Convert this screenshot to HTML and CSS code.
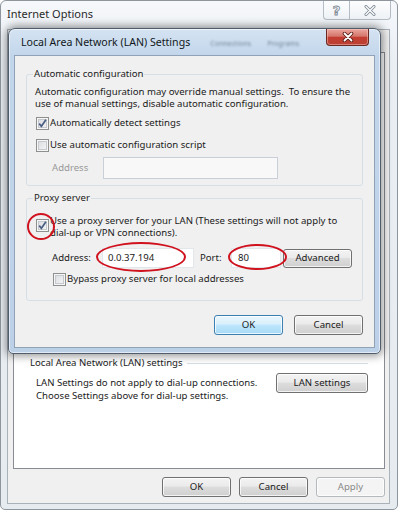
FILE: index.html
```html
<!DOCTYPE html>
<html>
<head>
<meta charset="utf-8">
<title>Internet Options</title>
<link rel="stylesheet" href="styles.css">
</head>
<body>
<div class="win">
  <div class="win-title">
    <span class="win-caption">Internet Options</span>
    <div class="cap-btns">
      <span class="cap-btn help">?</span>
      <span class="cap-btn close">
        <svg width="12" height="11" viewBox="0 0 12 11"><path d="M2 1.5 L10 9.5 M10 1.5 L2 9.5" stroke="#7d8995" stroke-width="3" stroke-linecap="round"/><path d="M2 1.5 L10 9.5 M10 1.5 L2 9.5" stroke="#fff" stroke-width="1.3" stroke-linecap="round"/></svg>
      </span>
    </div>
  </div>
  <div class="win-client">
    <div class="tabs">
      <span class="tab t1"></span><span class="tab t2"></span><span class="tab t3"></span><span class="tab t4"></span><span class="tab t5"></span><span class="tab t6"></span><span class="tab t7"></span>
    </div>
    <div class="tabpanel">
      <div class="lan-group">
        <div class="group-head"><span class="group-label">Local Area Network (LAN) settings</span><span class="rule"></span></div>
        <div class="lan-row">
          <p class="lan-text">LAN Settings do not apply to dial-up connections.<br>Choose Settings above for dial-up settings.</p>
          <button class="btn lan-btn">LAN settings</button>
        </div>
      </div>
    </div>
    <div class="btn-row">
      <button class="btn w69">OK</button>
      <button class="btn w69">Cancel</button>
      <button class="btn w69 disabled">Apply</button>
    </div>
  </div>
</div>

<div class="dlg">
  <div class="dlg-title">
    <span class="dlg-caption">Local Area Network (LAN) Settings</span>
    <span class="ghost-tabs"><span>Connections</span><span>Programs</span></span>
    <span class="dlg-close">
      <svg width="12" height="10" viewBox="0 0 12 10"><path d="M2.5 1.5 L9.5 8.5 M9.5 1.5 L2.5 8.5" stroke="#5b1e19" stroke-width="3.6" stroke-linecap="round"/><path d="M2.5 1.5 L9.5 8.5 M9.5 1.5 L2.5 8.5" stroke="#fff" stroke-width="1.8" stroke-linecap="round"/></svg>
    </span>
  </div>
  <div class="dlg-client">
    <fieldset class="grp g1">
      <legend>Automatic configuration</legend>
      <p class="desc">Automatic configuration may override manual settings.&nbsp; To ensure the<br>use of manual settings, disable automatic configuration.</p>
      <div class="chk-row r1"><span class="chk"><svg width="11" height="11" viewBox="0 0 11 11"><path d="M2.2 5.6 L4.4 8.3 L8.9 1.8" fill="none" stroke="#4a5d82" stroke-width="1.7"/></svg></span>Automatically detect settings</div>
      <div class="chk-row r2"><span class="chk"></span>Use automatic configuration script</div>
      <div class="field-row"><span class="muted lbl-script">Address</span><span class="edit edit-script"></span></div>
    </fieldset>
    <fieldset class="grp g2">
      <legend>Proxy server</legend>
      <div class="chk-row multi"><span class="chk"><svg width="11" height="11" viewBox="0 0 11 11"><path d="M2.2 5.6 L4.4 8.3 L8.9 1.8" fill="none" stroke="#4a5d82" stroke-width="1.7"/></svg></span><span>Use a proxy server for your LAN (These settings will not apply to<br>dial-up or VPN connections).</span></div>
      <div class="proxy-row">
        <span class="lbl-addr">Address:</span>
        <span class="edit edit-addr">0.0.37.194</span>
        <span class="lbl-port">Port:</span>
        <span class="edit edit-port">80</span>
        <button class="btn adv">Advanced</button>
      </div>
      <div class="chk-row bypass"><span class="chk"></span>Bypass proxy server for local addresses</div>
    </fieldset>
    <div class="dlg-btns">
      <button class="btn w69 focus">OK</button>
      <button class="btn w69">Cancel</button>
    </div>
  </div>
</div>

<span class="mark m1"></span>
<span class="mark m2"></span>
<span class="mark m3"></span>
</body>
</html>
```

FILE: styles.css
```css
* { box-sizing: border-box; }

body {
  margin: 0;
  width: 400px;
  height: 512px;
  overflow: hidden;
  position: relative;
  background: #fff;
  font: 9.6px/12px "Noto Sans", "Open Sans", sans-serif;
  color: #1b1b1b;
}

p { margin: 0; white-space: nowrap; }

/* ---------- outer window ---------- */
.win {
  width: 398px;
  height: 510px;
  border: 1px solid #8e959c;
  border-radius: 6px 6px 5px 5px;
  background: linear-gradient(#f6f8fb, #eaeff4 60px, #e6ebf0);
  display: flex;
  flex-direction: column;
}

.win-title {
  height: 28px;
  display: flex;
  align-items: flex-start;
  padding-left: 6px;
}

.win-caption {
  font-size: 11px;
  line-height: 26px;
  color: #2a2a2a;
}

.cap-btns {
  margin-left: auto;
  margin-right: 6px;
  display: flex;
}

.cap-btn {
  height: 19px;
  border: 1px solid #b4bcc5;
  border-top: none;
  background: linear-gradient(#fdfdfe, #eef2f6);
  display: flex;
  align-items: center;
  justify-content: center;
}

.help {
  width: 26px;
  border-right: none;
  border-radius: 0 0 0 4px;
  font: bold 13px/1 "DejaVu Sans", sans-serif;
  color: #fff;
  -webkit-text-stroke: 0.9px #7d8995;
}

.close {
  width: 42px;
  border-radius: 0 0 4px 0;
}

.win-client {
  flex: 1;
  margin: 0 7px 5px 6px;
  border: 1px solid #a9b1b9;
  background: #f0f0f0;
  display: flex;
  flex-direction: column;
  padding: 4px 4px 0 5px;
}

.tabs {
  height: 18px;
  display: flex;
  padding-left: 2px;
}

.tab {
  width: 48px;
  border: 1px solid #898c95;
  border-bottom: none;
  background: linear-gradient(#f2f2f2, #e3e3e3);
}

.tabpanel {
  height: 417px;
  border: 1px solid #898c95;
  background: #fff;
  padding: 304px 16px 0 16px;
}

.group-head {
  display: flex;
  align-items: center;
  height: 12px;
}

.group-label { padding-right: 4px; white-space: nowrap; }

.rule {
  flex: 1;
  border-top: 1px solid #d5dfe5;
}

.lan-row {
  display: flex;
  align-items: flex-start;
  justify-content: space-between;
  margin-top: 7px;
  padding-left: 6px;
}

.lan-text { line-height: 13px; }

.lan-btn {
  width: 92px;
  margin-top: -3px;
}

.btn-row {
  display: flex;
  justify-content: flex-end;
  gap: 8px;
  margin-top: 8px;
}

/* ---------- buttons ---------- */
.btn {
  height: 20px;
  padding: 0;
  border: 1px solid #707070;
  border-radius: 3px;
  background: linear-gradient(#f3f3f3 0%, #ebebeb 45%, #dddddd 50%, #cfcfcf 100%);
  box-shadow: inset 0 0 0 1px rgba(255, 255, 255, 0.75);
  font: inherit;
  color: #1b1b1b;
}

.w69 { width: 69px; }

.btn.focus {
  border-color: #3c7fb1;
  background: linear-gradient(#eaf6fd 0%, #d9f0fc 45%, #bee6fd 50%, #a7d9f5 100%);
}

.btn.disabled {
  border-color: #b5b9bc;
  background: #f4f4f4;
  color: #8a8a8a;
}

/* ---------- LAN settings dialog ---------- */
.dlg {
  position: absolute;
  left: 8px;
  top: 28px;
  width: 373px;
  height: 326px;
  border: 1px solid #4f5d6d;
  border-radius: 7px 7px 5px 5px;
  background: linear-gradient(#d5e3f2 0, #c2d6eb 27px, #bcd1e8 100%);
  box-shadow: 0 0 9px 2px rgba(0, 0, 0, 0.42), inset 0 0 0 1px rgba(255, 255, 255, 0.55);
  padding: 0 5px 5px 5px;
  display: flex;
  flex-direction: column;
}

.dlg-title {
  height: 26px;
  display: flex;
  align-items: flex-start;
}

.dlg-caption {
  padding-left: 7px;
  font-size: 10.6px;
  line-height: 26px;
  color: #101820;
  white-space: nowrap;
  flex: none;
}

.ghost-tabs {
  display: flex;
  gap: 16px;
  margin-left: 20px;
  line-height: 26px;
  padding-top: 2px;
  font-size: 7px;
  color: #56687c;
  filter: blur(1.3px);
  opacity: 0.75;
  white-space: nowrap;
}

.dlg-close {
  flex: none;
  margin-left: auto;
  margin-right: 6px;
  width: 43px;
  height: 17px;
  border: 1px solid #6a2822;
  border-top: none;
  border-radius: 0 0 4px 4px;
  background: linear-gradient(#eaa79f 0%, #d6766b 45%, #c33d31 52%, #bb4035 100%);
  box-shadow: inset 0 0 0 1px rgba(255, 210, 200, 0.45);
  display: flex;
  align-items: center;
  justify-content: center;
}

.dlg-client {
  flex: 1;
  background: #f0f0f0;
  border: 1px solid #8fa2b6;
  padding: 12px 11px 0 11px;
  display: flex;
  flex-direction: column;
}

.grp {
  margin: 0;
  min-width: 0;
  border: 1px solid #d5dfe5;
  border-radius: 3px;
  padding: 0 8px 6px 8px;
}

.grp legend {
  padding: 0 1px;
  margin-left: -2px;
  line-height: 12px;
}

.g2 {
  margin-top: 6px;
  padding-bottom: 14px;
}

.desc { margin-top: 6px; }

.chk-row {
  display: flex;
  align-items: center;
  height: 14px;
  white-space: nowrap;
}

.r1 { margin-top: 6px; }
.r2 { margin-top: 8px; }

.chk {
  width: 13px;
  height: 13px;
  margin-left: 1px;
  margin-right: 1px;
  border: 1px solid #8e8f8f;
  background: linear-gradient(135deg, #d6d9dd, #f8f8f8);
  box-shadow: inset 0 0 0 1px #f6f6f6, inset 0 0 0 2px #c5c9ce;
  display: flex;
  align-items: center;
  justify-content: center;
  flex: none;
}

.chk-row.multi {
  align-items: flex-start;
  height: auto;
  margin-top: 11px;
}

.chk-row.multi .chk { margin-top: 4px; }

.bypass { margin-top: 4px; }
.bypass .chk { margin-left: 18px; }

.field-row {
  display: flex;
  align-items: center;
  height: 22px;
  margin-top: 5px;
}

.muted { color: #9a9a9a; }

.lbl-script {
  margin-left: 17px;
  width: 51px;
}

.edit {
  height: 100%;
  border: 1px solid #c9cfd6;
  background: #f8f8f8;
}

.edit-script { width: 175px; }

.proxy-row {
  display: flex;
  align-items: center;
  height: 20px;
  margin-top: 9px;
}

.lbl-addr {
  margin-left: 17px;
  width: 50px;
}

.edit-addr {
  width: 92px;
  background: #fff;
  border-color: #e2e7ec;
  padding-left: 5px;
  line-height: 18px;
}

.lbl-port {
  margin-left: 6px;
  width: 31px;
}

.edit-port {
  width: 50px;
  background: #fff;
  border-color: #e2e7ec;
  padding-left: 6px;
  line-height: 18px;
}

.adv {
  width: 69px;
  height: 19px;
  margin-left: 2px;
}

.dlg-btns {
  display: flex;
  justify-content: flex-end;
  gap: 11px;
  margin-top: 14px;
}

/* ---------- red annotation ellipses ---------- */
.mark {
  position: absolute;
  border: 2.8px solid #d0121e;
  border-radius: 50%;
}

.m1 { left: 27px; top: 213px; width: 28px; height: 27px; }
.m2 { left: 96px; top: 242px; width: 90px; height: 30px; }
.m3 { left: 228px; top: 244px; width: 59px; height: 26px; }
```
